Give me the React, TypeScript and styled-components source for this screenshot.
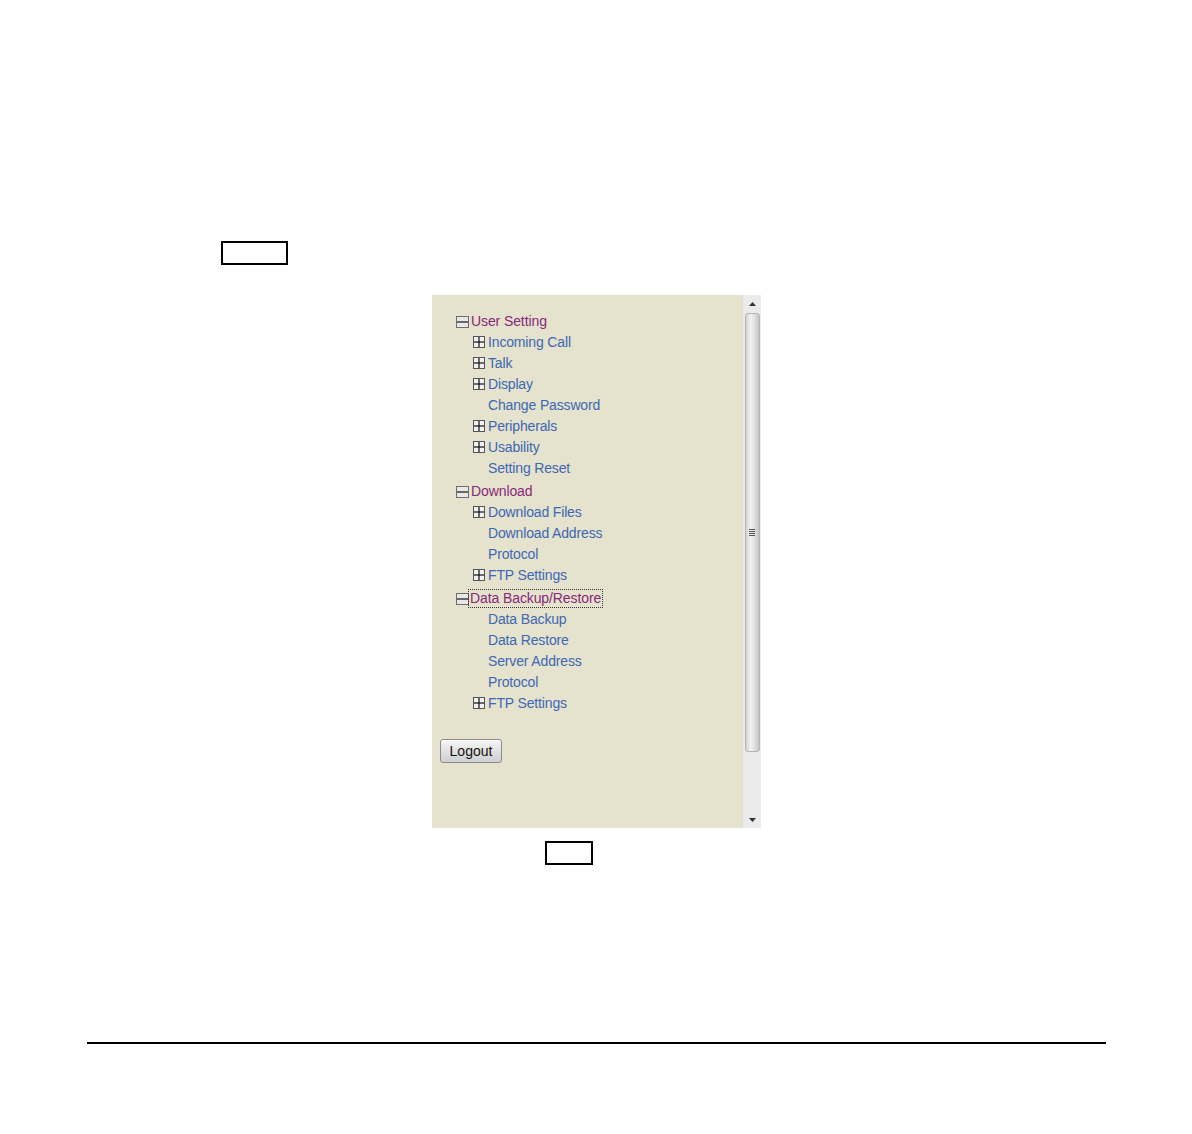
import React from "react";
import styled, { createGlobalStyle } from "styled-components";

const Global = createGlobalStyle`
  html, body { margin: 0; padding: 0; background: #ffffff; }
  body { font-family: "Liberation Sans", Arial, sans-serif; }
`;

const Page = styled.div`
  width: 1192px;
  height: 1134px;
  padding-top: 241px;
  box-sizing: border-box;
  display: flex;
  flex-direction: column;
  align-items: flex-start;
`;

const Callout = styled.div<{ $w: number; $h: number; $left: number; $top: number }>`
  width: ${(p) => p.$w}px;
  height: ${(p) => p.$h}px;
  margin-left: ${(p) => p.$left}px;
  margin-top: ${(p) => p.$top}px;
  border: 2px solid #000;
  box-sizing: border-box;
`;

const Frame = styled.div`
  margin-left: 432px;
  margin-top: 30px;
  width: 329px;
  height: 533px;
  display: flex;
  background: #e5e2cd;
`;

const Content = styled.div`
  flex: 1;
  padding: 17px 0 0 0;
  display: flex;
  flex-direction: column;
`;

const Tree = styled.div`
  padding-left: 24px;
  display: flex;
  flex-direction: column;
`;

const Group = styled.div`
  display: flex;
  flex-direction: column;
  margin-bottom: 4px;
`;

const HeaderRow = styled.div`
  height: 19px;
  display: flex;
  align-items: center;
  font-size: 14px;
  letter-spacing: -0.1px;
  color: #87297a;
`;

const HeaderLabel = styled.span<{ $focus?: boolean }>`
  line-height: 17px;
  padding: 0 1px;
  margin-left: ${(p) => (p.$focus ? "0px" : "1px")};
  outline: ${(p) => (p.$focus ? "1px dotted #333" : "none")};
  outline-offset: 0;
`;

const ItemRow = styled.div`
  height: 21px;
  display: flex;
  align-items: center;
  padding-left: 17px;
  font-size: 14px;
  letter-spacing: -0.15px;
  color: #3d68b3;
`;

const IconSlot = styled.span`
  width: 15px;
  height: 12px;
  display: inline-flex;
  align-items: center;
`;

const BoxIcon = styled.svg`
  display: block;
`;

const Minus = () => (
  <BoxIcon width="13" height="12" viewBox="0 0 13 12">
    <rect x="0.5" y="0.5" width="12" height="11" fill="#e8e8e8" stroke="#6e6e6e" />
    <line x1="1" y1="6" x2="12" y2="6" stroke="#111" strokeWidth="1.2" />
  </BoxIcon>
);

const Plus = () => (
  <BoxIcon width="12" height="12" viewBox="0 0 12 12">
    <rect x="0.5" y="0.5" width="11" height="11" fill="#f1f1f1" stroke="#555" />
    <line x1="1" y1="6" x2="11" y2="6" stroke="#111" strokeWidth="1.2" />
    <line x1="6" y1="1" x2="6" y2="11" stroke="#111" strokeWidth="1.2" />
  </BoxIcon>
);

const LogoutButton = styled.button`
  margin-left: 8px;
  margin-top: 22px;
  align-self: flex-start;
  width: 62px;
  height: 24px;
  font-family: "Liberation Sans", Arial, sans-serif;
  font-size: 14px;
  color: #111;
  border: 1px solid #8a8a8a;
  border-radius: 3px;
  background: linear-gradient(#f6f6f6, #e2e2e2 50%, #cfcfcf);
  box-shadow: inset 0 1px 0 #fff;
  padding: 0;
`;

const ScrollBar = styled.div`
  width: 18px;
  background: #ebebeb;
  border-left: 1px solid #dcdcdc;
  display: flex;
  flex-direction: column;
  align-items: center;
`;

const ArrowBtn = styled.div`
  height: 17px;
  width: 100%;
  display: flex;
  align-items: center;
  justify-content: center;
`;

const Thumb = styled.div`
  width: 15px;
  height: 439px;
  margin-top: 1px;
  border: 1px solid #b4b4b4;
  border-radius: 3px;
  box-sizing: border-box;
  background: linear-gradient(90deg, #d2d2d2, #f2f2f2 35%, #e4e4e4 60%, #c4c4c4);
  display: flex;
  align-items: center;
  justify-content: center;
`;

const Grip = styled.div`
  width: 6px;
  display: flex;
  flex-direction: column;
  gap: 1px;
  & > span {
    height: 1px;
    background: #555;
  }
`;

const Spacer = styled.div`
  flex: 1;
`;

const RuleLine = styled.div`
  margin-left: 87px;
  margin-top: 177px;
  width: 1019px;
  height: 2px;
  background: #000;
`;

type Item = { label: string; expandable?: boolean };
type GroupT = { title: string; focus?: boolean; items: Item[] };

const groups: GroupT[] = [
  {
    title: "User Setting",
    items: [
      { label: "Incoming Call", expandable: true },
      { label: "Talk", expandable: true },
      { label: "Display", expandable: true },
      { label: "Change Password" },
      { label: "Peripherals", expandable: true },
      { label: "Usability", expandable: true },
      { label: "Setting Reset" },
    ],
  },
  {
    title: "Download",
    items: [
      { label: "Download Files", expandable: true },
      { label: "Download Address" },
      { label: "Protocol" },
      { label: "FTP Settings", expandable: true },
    ],
  },
  {
    title: "Data Backup/Restore",
    focus: true,
    items: [
      { label: "Data Backup" },
      { label: "Data Restore" },
      { label: "Server Address" },
      { label: "Protocol" },
      { label: "FTP Settings", expandable: true },
    ],
  },
];

export default function App() {
  return (
    <>
      <Global />
      <Page>
        <Callout $w={67} $h={24} $left={221} $top={0} />
        <Frame>
          <Content>
            <Tree>
              {groups.map((g) => (
                <Group key={g.title}>
                  <HeaderRow>
                    <Minus />
                    <HeaderLabel $focus={g.focus}>{g.title}</HeaderLabel>
                  </HeaderRow>
                  {g.items.map((it, i) => (
                    <ItemRow key={i}>
                      <IconSlot>{it.expandable ? <Plus /> : null}</IconSlot>
                      <span>{it.label}</span>
                    </ItemRow>
                  ))}
                </Group>
              ))}
            </Tree>
            <LogoutButton>Logout</LogoutButton>
          </Content>
          <ScrollBar>
            <ArrowBtn>
              <svg width="7" height="4" viewBox="0 0 7 4">
                <polygon points="0,4 7,4 3.5,0" fill="#333" />
              </svg>
            </ArrowBtn>
            <Thumb>
              <Grip>
                <span />
                <span />
                <span />
                <span />
              </Grip>
            </Thumb>
            <Spacer />
            <ArrowBtn>
              <svg width="7" height="4" viewBox="0 0 7 4">
                <polygon points="0,0 7,0 3.5,4" fill="#333" />
              </svg>
            </ArrowBtn>
          </ScrollBar>
        </Frame>
        <Callout $w={48} $h={24} $left={545} $top={13} />
        <RuleLine />
      </Page>
    </>
  );
}
